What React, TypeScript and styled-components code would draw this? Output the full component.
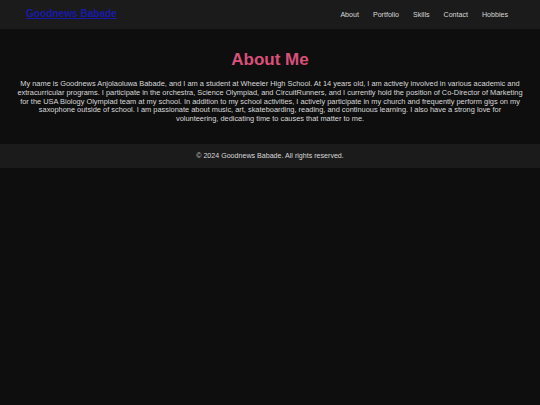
import React from "react";
import styled, { createGlobalStyle } from "styled-components";

const Global = createGlobalStyle`
  html, body { margin: 0; padding: 0; background: #0e0e0e; }
  body {
    font-family: "Liberation Sans", Arial, sans-serif;
    color: #d8d8d8;
    -webkit-font-smoothing: antialiased;
  }
`;

const Page = styled.div`
  min-height: 405px;
  background: #0e0e0e;
`;

const Header = styled.header`
  display: flex;
  align-items: center;
  justify-content: space-between;
  height: 29px;
  padding: 0 25px 0 26px;
  background: #1b1b1b;
`;

const Logo = styled.a`
  font-size: 10.1px;
  font-weight: bold;
  color: #1a1aa8;
  text-decoration: underline;
  line-height: 1;
`;

const Nav = styled.nav`
  display: flex;
`;

const NavLink = styled.a`
  font-size: 7.1px;
  color: #d8d8d8;
  text-decoration: none;
  margin: 0 7px;
`;

const Main = styled.section`
  padding: 21px 16px 20px;
  text-align: center;
`;

const Title = styled.h2`
  margin: 0 0 10px;
  font-size: 17px;
  font-weight: bold;
  color: #d9507a;
  line-height: 20px;
`;

const Text = styled.p`
  margin: 0;
  font-size: 7.42px;
  line-height: 8.75px;
  color: #d8d8d8;
`;

const Footer = styled.footer`
  height: 24px;
  display: flex;
  align-items: center;
  justify-content: center;
  background: #1b1b1b;
  font-size: 7.1px;
  color: #d8d8d8;
`;

export default function App() {
  return (
    <Page>
      <Global />
      <Header>
        <Logo href="#">Goodnews Babade</Logo>
        <Nav>
          {["About", "Portfolio", "Skills", "Contact", "Hobbies"].map((l) => (
            <NavLink key={l} href="#">{l}</NavLink>
          ))}
        </Nav>
      </Header>
      <Main>
        <Title>About Me</Title>
        <Text>
          My name is Goodnews Anjolaoluwa Babade, and I am a student at Wheeler High School. At 14 years old, I am actively involved in various academic and extracurricular programs. I participate in the orchestra, Science Olympiad, and CircuitRunners, and I currently hold the position of Co-Director of Marketing for the USA Biology Olympiad team at my school. In addition to my school activities, I actively participate in my church and frequently perform gigs on my saxophone outside of school. I am passionate about music, art, skateboarding, reading, and continuous learning. I also have a strong love for<br />
          volunteering, dedicating time to causes that matter to me.
        </Text>
      </Main>
      <Footer>© 2024 Goodnews Babade. All rights reserved.</Footer>
    </Page>
  );
}
